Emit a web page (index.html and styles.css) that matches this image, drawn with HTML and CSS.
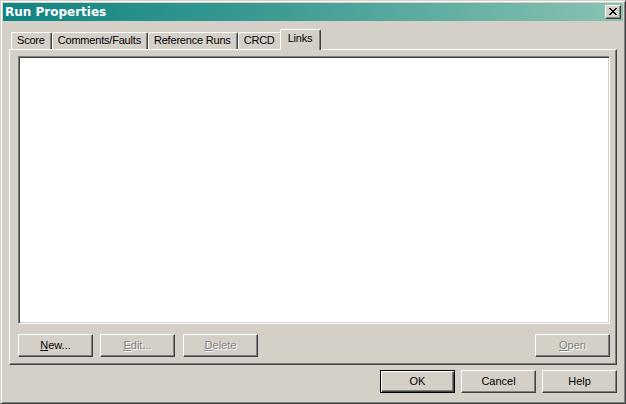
FILE: index.html
```html
<!DOCTYPE html>
<html>
<head>
<meta charset="utf-8">
<link rel="stylesheet" href="styles.css">
</head>
<body>
<div class="window">
  <div class="titlebar">
    <span class="title">Run Properties</span>
    <button class="close" aria-label="Close">
      <svg width="8" height="7" viewBox="0 0 8 7" shape-rendering="crispEdges">
        <path fill="#000" d="M0 0h2v1H0zM6 0h2v1H6zM1 1h2v1H1zM5 1h2v1H5zM2 2h4v1H2zM3 3h2v1H3zM2 4h4v1H2zM1 5h2v1H1zM5 5h2v1H5zM0 6h2v1H0zM6 6h2v1H6z"/>
      </svg>
    </button>
  </div>
  <div class="body">
    <div class="tabs">
      <div class="tab">Score</div>
      <div class="tab">Comments/Faults</div>
      <div class="tab">Reference Runs</div>
      <div class="tab">CRCD</div>
      <div class="tab selected">Links</div>
    </div>
    <div class="panel">
      <div class="list"></div>
      <div class="row">
        <button class="btn"><u>N</u>ew...</button>
        <button class="btn" disabled><u>E</u>dit...</button>
        <button class="btn wide-gap" disabled><u>D</u>elete</button>
        <span class="spacer"></span>
        <button class="btn" disabled><u>O</u>pen</button>
      </div>
    </div>
    <div class="footer">
      <button class="btn default">OK</button>
      <button class="btn">Cancel</button>
      <button class="btn">Help</button>
    </div>
  </div>
</div>
</body>
</html>
```

FILE: styles.css
```css
* { box-sizing: border-box; }

body {
  margin: 0;
  background: #d4d0c8;
  font-family: "Liberation Sans", Arial, sans-serif;
  font-size: 11px;
  color: #000;
}

.window {
  width: 626px;
  height: 404px;
  background: #d4d0c8;
  border: 1px solid;
  border-color: #d4d0c8 #404040 #404040 #d4d0c8;
  box-shadow: inset 1px 1px 0 #fff, inset -1px -1px 0 #808080;
  padding: 2px;
  display: flex;
  flex-direction: column;
}

.titlebar {
  height: 18px;
  flex: none;
  background: linear-gradient(to right, #0f8483 0%, #3e9c94 45%, #8ac2b2 100%);
  display: flex;
  align-items: flex-start;
  justify-content: space-between;
  padding-left: 2px;
}

.title {
  font-family: "DejaVu Sans", sans-serif;
  font-weight: bold;
  font-size: 12px;
  line-height: 18px;
  color: #fff;
}

.close {
  width: 16px;
  height: 14px;
  margin: 2px 2px 0 0;
  padding: 0;
  background: #d4d0c8;
  border: 1px solid;
  border-color: #fff #404040 #404040 #fff;
  box-shadow: inset -1px -1px 0 #808080;
  display: flex;
  align-items: center;
  justify-content: center;
}

.close svg { display: block; margin: 0 1px 1px 0; }

.body {
  flex: 1;
  padding: 8px 6px 8px 6px;
  display: flex;
  flex-direction: column;
}

.tabs {
  display: flex;
  height: 20px;
  flex: none;
  margin-left: 2px;
  align-items: flex-start;
  position: relative;
  z-index: 1;
}

.tab {
  margin-top: 3px;
  height: 17px;
  padding: 0 6px 0 5px;
  border-top: 1px solid #fff;
  border-left: 1px solid #fff;
  border-right: 1px solid #404040;
  border-radius: 2px 2px 0 0;
  box-shadow: inset -1px 0 0 #808080;
  line-height: 15px;
  letter-spacing: -0.2px;
  white-space: nowrap;
}

.tab.selected {
  margin: 0 -2px;
  height: 21px;
  padding: 0 8px 0 7px;
  line-height: 17px;
  background: #d4d0c8;
}

.panel {
  height: 316px;
  flex: none;
  border: 1px solid;
  border-color: #fff #404040 #404040 #fff;
  box-shadow: inset -1px -1px 0 #808080;
  padding: 6px 6px 7px 8px;
  display: flex;
  flex-direction: column;
}

.list {
  height: 268px;
  flex: none;
  background: #fff;
  border: 1px solid;
  border-color: #808080 #fff #fff #808080;
  box-shadow: inset 1px 1px 0 #404040, inset -1px -1px 0 #d4d0c8;
}

.row {
  display: flex;
  margin-top: 10px;
  gap: 7px;
}

.row .wide-gap { margin-left: 1px; }

.spacer { flex: 1; }

.btn {
  width: 75px;
  height: 23px;
  padding: 0;
  font-family: inherit;
  font-size: 11px;
  line-height: 21px;
  color: #000;
  background: #d4d0c8;
  border: 1px solid;
  border-color: #fff #404040 #404040 #fff;
  box-shadow: inset -1px -1px 0 #808080;
  text-align: center;
}

.btn u { text-decoration-thickness: 1px; text-underline-offset: 1px; }

.btn:disabled {
  color: #808080;
  text-shadow: 1px 1px 0 #fff;
}

.btn.default {
  border-color: #000;
  box-shadow: inset 1px 1px 0 #fff, inset -1px -1px 0 #404040, inset -2px -2px 0 #808080;
}

.footer {
  display: flex;
  justify-content: flex-end;
  gap: 6px;
  margin-top: 5px;
}
```
